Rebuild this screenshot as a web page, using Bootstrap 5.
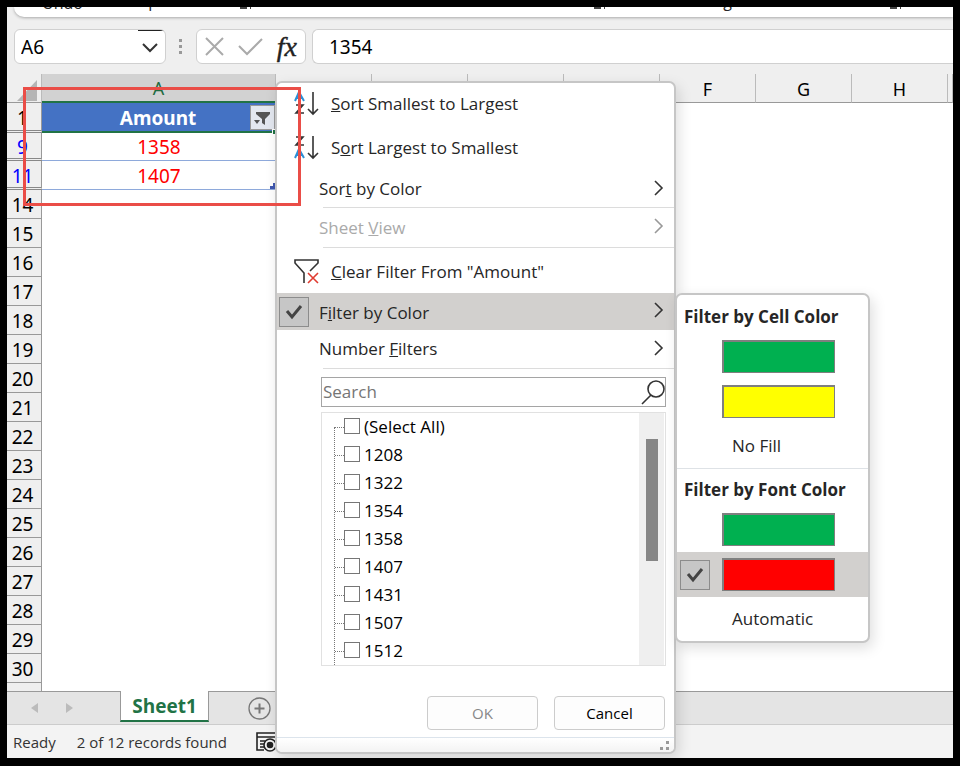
<!DOCTYPE html>
<html lang="en">
<head>
<meta charset="utf-8">
<meta name="viewport" content="width=device-width, initial-scale=1">
<title>Sheet1</title>
<link href="https://cdn.jsdelivr.net/npm/bootstrap@5.3.0/dist/css/bootstrap.min.css" rel="stylesheet">
<style>
body{background:#000;font-family:"Open Sans","Noto Sans",sans-serif;font-size:16px;line-height:24px;color:#262626}
.frame{padding:7px 7px 8px}
.app{background:#efefef;overflow:hidden}
.ribbon{height:10px;margin-left:7px;background:#fff;border-bottom-left-radius:10px;box-shadow:0 1px 3px #aaa;overflow:hidden}
.ribbon-labels{margin-top:-18px;font-size:16px;padding-left:28px}
.ribbon-labels .r-undo{margin-top:2px;width:88px}
.ribbon-labels .r-clip{width:110px}
.ribbon-labels .r-font{width:342px}
.ribbon-labels .r-align{width:284px;padding-left:99px}
.ribbon-labels span{flex-shrink:0}
.ribbon-labels svg{margin-top:18px}
.fbar{margin-top:12px;padding-left:7px}
.fbox{height:35px;background:#fff;border:1px solid #d0d0d0;border-radius:6px}
.namebox{width:152px;padding:0 4px 0 6px;background:linear-gradient(#222,#222) 123px 0/26px 1px no-repeat #fff}
.namebox input,.formula input{border:0;outline:0;background:transparent;padding:0;min-width:0;font-size:19px;font-family:"Noto Sans",sans-serif}
.fxbox{width:110px}
.dots{margin:0 8px 0 7px}
.plain{border:0;background:none;padding:0;line-height:0;color:inherit}
.formula{border-right:0;border-radius:6px 0 0 6px;padding-left:16px;margin-left:6px}
.grid-area{margin-top:10px;background:#fff}
.sheet{table-layout:fixed;width:100%;border-collapse:separate;border-spacing:0;font-family:"Noto Sans",sans-serif;font-size:19px;line-height:24px;color:#000}
.sheet th,.sheet td{padding:0;font-weight:400;text-align:center;height:29px}
.sheet thead th{background:#efefef;border-right:1px solid #bbb;border-bottom:1px solid #999;font-size:18px;vertical-align:bottom;padding-bottom:1px}
.sheet thead th.sel{background:#d2d2d2;color:#1e6b41;border-bottom:2px solid #217346}
.sheet tbody th{background:#efefef;border-right:1px solid #999;border-bottom:1px solid #999;padding:2px 3px 0 0}
.sheet tbody th.skip{border-bottom:3px double #888;line-height:22px;padding-top:3px}
.sheet tbody th.hit{color:#00f}
.sheet .r1 th,.sheet .r1 td{height:30px}
.sheet .r9 th,.sheet .r9 td{height:28px}
.sheet .last th{height:8px;border-bottom:0;padding:0}
.sheet td.val{color:#f00;border-bottom:1px solid #8ea9db;padding-top:1px;position:relative}
.sheet td.head{color:#fff;background:#4472c4;border-bottom:2px solid #217346;font-weight:700;padding-top:1px;position:relative}
.sheet td.head::after{content:"";position:absolute;right:0;bottom:-3px;width:4px;height:5px;background:#217346;border:solid #fff;border-width:1px 0 0 1px}
.sheet td.end::after{content:"";position:absolute;right:0;bottom:0;width:6px;height:6px;background:linear-gradient(#4058b0,#4058b0) 3px 0/3px 3px no-repeat,linear-gradient(#4058b0,#4058b0) 0 3px/6px 3px no-repeat}
.filter-btn{width:25px;height:25px;background:#e3e7ef;border:1px solid #999;margin-right:1px}
.corner{vertical-align:bottom}
.tabs{height:34px;background:#e4e4e4;border-top:1px solid #999;border-bottom:1px solid #ccc;color:#bbb}
.tab-nav{width:113px;padding-left:22px;gap:22px}
.sheet-tab{width:89px;height:31px;margin-top:-1px;background:#fff;border:1px solid #999;border-top:0;border-bottom:2px solid #217346;color:#217346;font-weight:700;font-size:19px;text-decoration:none;line-height:30px}
.new-tab{margin-left:39px}
.status{height:33px;background:#f3f3f3;font-size:15px;padding-left:6px;gap:21px;color:#333}
.pop{position:absolute;background:#fff;border:2px solid #c6c6c6;border-radius:7px;box-shadow:3px 5px 14px rgba(0,0,0,.13)}
.menu{left:275px;top:81px;width:401px}
.sub{left:675px;top:293px;width:195px;padding-top:1px}
.mark-box{position:absolute;left:23px;top:87px;width:278px;height:119px;border:3px solid #ea4d47}
.mi{display:flex;align-items:center;width:100%;border:0;background:none;padding:0 9px 0 0;color:#262626;text-align:left;font-size:17px}
.mi .ico{width:54px;padding-left:16px;line-height:0}
.mi .lab{flex:1}
.mi.tall{height:44px;padding-bottom:2px}
.mi.clear{height:45px;padding-top:2px}
.mi.sub-l{padding-left:42px;height:36px}
.mi.sub-l.num{height:38px}
.mi.off{color:#aaa}
.mi.sub-l.off{height:39px}
.mi.on{background:#d2d0ce;padding-left:2px;height:37px}
.mi.on .lab{padding:2px 0 0 10px}
.tick{width:30px;height:30px;background:#c6c6c6;border:1px solid #8c8c8c;display:flex;align-items:center;justify-content:center}
.rule{margin-left:46px;border-top:1px solid #dcdcdc}
.search{margin:8px 8px 0 44px;height:30px;border:1px solid #a5a5a5}
.search input{flex:1;min-width:0;border:0;outline:0;padding:0 0 0 1px;font-size:17px}
.search input::placeholder{color:#757575;opacity:1}
.list{margin:5px 8px 0 44px;height:254px;border:1px solid #e1e1e1;font-size:17px;color:#000}
.tree{margin:14px 0 0 12px;border-left:1px dotted #777;flex:1}
.tree-in{margin-top:-14px}
.opt{height:28px;display:flex;align-items:center}
.opt::before{content:"";width:9px;border-top:1px dotted #777}
.opt input{appearance:none;width:16px;height:16px;border:1px solid #767676;background:#fff;margin:0 4px 2px 0}
.track{width:25px;background:#efefef;padding:26px 6px 0 7px;margin-right:1px}
.thumb{height:122px;background:#868686}
.actions{margin:30px 9px 0;gap:16px}
.actions .btn{width:111px;height:34px;padding:0;border:1px solid #ccc;border-radius:4px;background:#fdfdfd;color:#000;font-size:15px}
.actions .btn:disabled{color:#888;opacity:1}
.grip{margin-top:7px;height:15px;border-top:1px solid #dce4ec;border-radius:0 0 5px 5px;background:linear-gradient(#fff,#f3f3f3);padding:3px 4px 0 0;line-height:0;text-align:right}
.sub h2{margin:0;font-size:17px;font-weight:700;line-height:24px;padding:9px 7px 5px}
.sw{display:flex;align-items:center;width:100%;height:45px;border:0;background:none;padding:0 0 0 3px}
.sw .slot{width:42px}
.chip{width:113px;height:33px;border:solid #7f7f7f;border-width:2px 1px 1px 2px}
.green{background:#00b050}.yellow{background:#ff0}.red{background:#f00}
.sw.on{background:#d2d0ce}
.word{display:block;border:0;background:none;padding:0 0 0 55px;height:44px;font-size:17px;color:#262626}
.fx{font-family:"Liberation Serif",serif;font-style:italic;font-size:28px;line-height:30px;color:#222;-webkit-text-stroke:.4px #222}
</style>
<script src="https://cdn.jsdelivr.net/npm/bootstrap@5.3.0/dist/js/bootstrap.bundle.min.js"></script>
</head>
<body>
<div class="frame min-vh-100 d-flex flex-column">
<main class="app flex-grow-1 d-flex flex-column">
  <div class="ribbon flex-shrink-0"><div class="ribbon-labels d-flex align-items-start"><span class="r-undo">Undo</span><span class="r-clip">Clipboard</span><svg class="flex-shrink-0" width="12" height="3" fill="#444"><path d="M0 0h7v2H0zM10 0h1v2h-1z"/></svg><span class="r-font"></span><svg class="flex-shrink-0" width="12" height="3" fill="#444"><path d="M0 0h7v2H0zM10 0h1v2h-1z"/></svg><span class="r-align">Alignment</span><svg class="flex-shrink-0" width="12" height="3" fill="#444"><path d="M0 0h7v2H0zM10 0h1v2h-1z"/></svg></div></div>
  <div class="fbar d-flex align-items-center flex-shrink-0">
    <div class="fbox namebox d-flex align-items-center">
      <input class="flex-grow-1" aria-label="Name Box" value="A6">
      <button class="plain" aria-label="Name list"><svg width="22" height="14" fill="none" stroke="#333" stroke-width="2"><path d="M4 4l7 7 7-7"/></svg></button>
    </div>
    <svg class="dots" width="15" height="20" fill="#999"><path d="M6 2h3v3H6zM6 8h3v3H6zM6 14h3v3H6z"/></svg>
    <div class="fbox fxbox d-flex align-items-center justify-content-between px-2">
      <button class="plain" aria-label="Cancel entry"><svg width="20" height="20" fill="none" stroke="#aaa" stroke-width="2"><path d="M1 1l17 17M18 1L1 18"/></svg></button>
      <button class="plain" aria-label="Enter"><svg width="26" height="20" fill="none" stroke="#aaa" stroke-width="2"><path d="M1 9l8 8L24 2"/></svg></button>
      <button class="plain fx" aria-label="Insert function">fx</button>
    </div>
    <div class="fbox formula d-flex align-items-center flex-grow-1"><input class="w-100" aria-label="Formula bar" value="1354"></div>
  </div>
  <div class="grid-area flex-grow-1">
    <table class="sheet">
      <colgroup><col style="width:35px"><col style="width:234px"><col style="width:96px"><col style="width:96px"><col style="width:96px"><col style="width:96px"><col style="width:96px"><col style="width:96px"><col style="width:96px"><col></colgroup>
      <thead><tr><th class="corner"><svg class="d-block ms-auto me-1" width="20" height="21" fill="#b5b5b5"><path d="M20 0v21H0z"/></svg></th><th class="sel" scope="col">A</th><th></th><th></th><th></th><th></th><th scope="col">F</th><th scope="col">G</th><th scope="col">H</th><th></th></tr></thead>
      <tbody>
        <tr class="r1"><th class="skip" scope="row">1</th><td class="head"><div class="d-flex align-items-center"><span class="flex-grow-1 ps-4">Amount</span><button class="filter-btn plain" aria-label="Filter"><svg width="23" height="23" fill="#555"><path d="M5 6h14v2l-5 5v6l-3-2v-4L5 8zM3 14h6l-3 4z"/></svg></button></div></td><td colspan="8"></td></tr>
        <tr class="r9"><th class="skip hit" scope="row">9</th><td class="val">1358</td><td colspan="8"></td></tr>
        <tr><th class="skip hit" scope="row">11</th><td class="val end">1407</td><td colspan="8"></td></tr>
        <tr><th scope="row">14</th><td></td><td colspan="8"></td></tr>
        <tr><th scope="row">15</th><td></td><td colspan="8"></td></tr>
        <tr><th scope="row">16</th><td></td><td colspan="8"></td></tr>
        <tr><th scope="row">17</th><td></td><td colspan="8"></td></tr>
        <tr><th scope="row">18</th><td></td><td colspan="8"></td></tr>
        <tr><th scope="row">19</th><td></td><td colspan="8"></td></tr>
        <tr><th scope="row">20</th><td></td><td colspan="8"></td></tr>
        <tr><th scope="row">21</th><td></td><td colspan="8"></td></tr>
        <tr><th scope="row">22</th><td></td><td colspan="8"></td></tr>
        <tr><th scope="row">23</th><td></td><td colspan="8"></td></tr>
        <tr><th scope="row">24</th><td></td><td colspan="8"></td></tr>
        <tr><th scope="row">25</th><td></td><td colspan="8"></td></tr>
        <tr><th scope="row">26</th><td></td><td colspan="8"></td></tr>
        <tr><th scope="row">27</th><td></td><td colspan="8"></td></tr>
        <tr><th scope="row">28</th><td></td><td colspan="8"></td></tr>
        <tr><th scope="row">29</th><td></td><td colspan="8"></td></tr>
        <tr><th scope="row">30</th><td></td><td colspan="8"></td></tr>
        <tr class="last"><th></th></tr>
      </tbody>
    </table>
  </div>
  <div class="tabs d-flex flex-shrink-0">
    <div class="tab-nav d-flex align-items-center">
      <button class="plain" aria-label="Previous sheet"><svg width="12" height="12" fill="#bbb"><path d="M9 1v10L2 6z"/></svg></button>
      <button class="plain" aria-label="Next sheet"><svg width="12" height="12" fill="#bbb"><path d="M3 1v10l7-5z"/></svg></button>
    </div>
    <a class="sheet-tab text-center" href="#">Sheet1</a>
    <button class="plain new-tab" aria-label="New sheet"><svg width="23" height="23" fill="none" stroke="#777"><circle cx="11.5" cy="11.5" r="10.5" stroke-width="1.3"/><path d="M6.500 11.500h10M11.500 6.500v10" stroke-width="2"/></svg></button>
  </div>
  <div class="status d-flex align-items-center flex-shrink-0">
    <span>Ready</span><span>2 of 12 records found</span>
    <svg class="ms-2" width="24" height="20" fill="none" stroke="#222" stroke-width="1.600"><path d="M8 18H1V1h22v8M1 5h22M4 9h5M4 12h4M4 15h4"/><circle cx="14" cy="13" r="6"/><circle cx="14" cy="13" r="2.500" fill="#222"/></svg>
  </div>
</main>
</div>

<div class="pop menu">
  <button class="mi tall"><span class="ico"><svg width="28" height="28" fill="none"><path d="M2 11L6 2l5 9M4 8h5" stroke="#2b8fd6" stroke-width="2"/><path d="M3 15h7L3 23h8" stroke="#333" stroke-width="1.600"/><path d="M20 2v22M15 19l5 5 5-5" stroke="#333" stroke-width="1.600"/></svg></span><span class="lab"><u>S</u>ort Smallest to Largest</span></button>
  <button class="mi tall"><span class="ico"><svg width="28" height="28" fill="none"><path d="M3 3h7L3 11h8" stroke="#333" stroke-width="1.600"/><path d="M2 24l4-9 5 9M4 21h5" stroke="#2b8fd6" stroke-width="2"/><path d="M20 2v22M15 19l5 5 5-5" stroke="#333" stroke-width="1.600"/></svg></span><span class="lab">S<u>o</u>rt Largest to Smallest</span></button>
  <button class="mi sub-l"><span class="lab">Sor<u>t</u> by Color</span><svg width="12" height="19" fill="none" stroke="#333" stroke-width="1.600"><path d="M2 1l7 7-7 7"/></svg></button>
  <div class="rule"></div>
  <button class="mi sub-l off" disabled><span class="lab">Sheet <u>V</u>iew</span><svg width="12" height="19" fill="none" stroke="#999" stroke-width="1.600"><path d="M2 1l7 7-7 7"/></svg></button>
  <div class="rule"></div>
  <button class="mi clear"><span class="ico"><svg width="26" height="26" fill="none" stroke="#333" stroke-width="1.600"><path d="M11 24V14L2 4V1h23v3l-8 8"/><path d="M15 14l10 10M25 14L15 24" stroke="#e03c31"/></svg></span><span class="lab"><u>C</u>lear Filter From "Amount"</span></button>
  <button class="mi on"><span class="tick"><svg width="20" height="18" fill="none" stroke="#444" stroke-width="3"><path d="M3 8l5 6 9-11"/></svg></span><span class="lab">F<u>i</u>lter by Color</span><svg width="12" height="19" fill="none" stroke="#333" stroke-width="1.600"><path d="M2 1l7 7-7 7"/></svg></button>
  <button class="mi sub-l num"><span class="lab">Number <u>F</u>ilters</span><svg width="12" height="19" fill="none" stroke="#333" stroke-width="1.600"><path d="M2 1l7 7-7 7"/></svg></button>
  <div class="rule"></div>
  <div class="search d-flex align-items-center"><input type="text" placeholder="Search" aria-label="Search"><svg width="24" height="27" fill="none" stroke="#333" stroke-width="1.600"><circle cx="15" cy="10" r="8"/><path d="M10 16L1 25"/></svg></div>
  <div class="list d-flex overflow-hidden">
    <div class="tree"><div class="tree-in">
      <label class="opt"><input type="checkbox">(Select All)</label>
      <label class="opt"><input type="checkbox">1208</label>
      <label class="opt"><input type="checkbox">1322</label>
      <label class="opt"><input type="checkbox">1354</label>
      <label class="opt"><input type="checkbox">1358</label>
      <label class="opt"><input type="checkbox">1407</label>
      <label class="opt"><input type="checkbox">1431</label>
      <label class="opt"><input type="checkbox">1507</label>
      <label class="opt"><input type="checkbox">1512</label>
    </div></div>
    <div class="track"><div class="thumb"></div></div>
  </div>
  <div class="actions d-flex justify-content-end"><button class="btn" disabled>OK</button><button class="btn">Cancel</button></div>
  <div class="grip"><svg width="10" height="10" fill="#999"><path d="M6 0h3v3H6zM6 6h3v3H6zM0 6h3v3H0z"/></svg></div>
</div>

<div class="pop sub">
  <h2>Filter by Cell Color</h2>
  <button class="sw" aria-label="Green cell"><span class="slot"></span><span class="chip green"></span></button>
  <button class="sw" aria-label="Yellow cell"><span class="slot"></span><span class="chip yellow"></span></button>
  <button class="word">No Fill</button>
  <div class="border-top"></div>
  <h2>Filter by Font Color</h2>
  <button class="sw" aria-label="Green font"><span class="slot"></span><span class="chip green"></span></button>
  <button class="sw on" aria-label="Red font"><span class="slot"><span class="tick"><svg width="20" height="18" fill="none" stroke="#444" stroke-width="3"><path d="M3 8l5 6 9-11"/></svg></span></span><span class="chip red"></span></button>
  <button class="word">Automatic</button>
</div>
<div class="mark-box"></div>
</body>
</html>
